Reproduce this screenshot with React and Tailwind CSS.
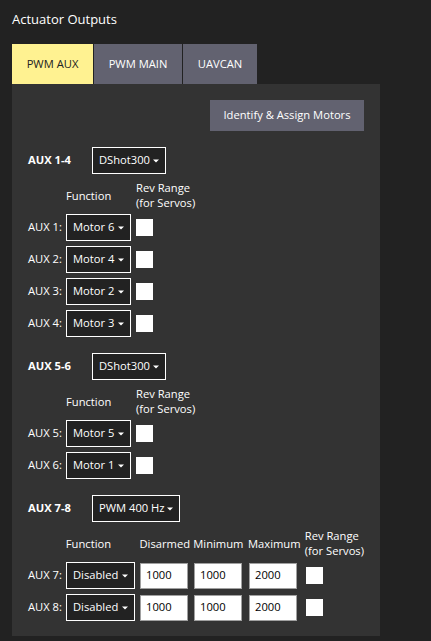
const groups = [
  {
    name: "AUX 1-4",
    protocol: "DShot300",
    protocolWidth: "w-[74px]",
    pwm: false,
    rows: [
      { label: "AUX 1:", fn: "Motor 6" },
      { label: "AUX 2:", fn: "Motor 4" },
      { label: "AUX 3:", fn: "Motor 2" },
      { label: "AUX 4:", fn: "Motor 3" },
    ],
  },
  {
    name: "AUX 5-6",
    protocol: "DShot300",
    protocolWidth: "w-[74px]",
    pwm: false,
    rows: [
      { label: "AUX 5:", fn: "Motor 5" },
      { label: "AUX 6:", fn: "Motor 1" },
    ],
  },
  {
    name: "AUX 7-8",
    protocol: "PWM 400 Hz",
    protocolWidth: "w-[88px]",
    pwm: true,
    rows: [
      { label: "AUX 7:", fn: "Disabled", disarmed: "1000", min: "1000", max: "2000" },
      { label: "AUX 8:", fn: "Disabled", disarmed: "1000", min: "1000", max: "2000" },
    ],
  },
];

function Caret() {
  return (
    <svg width="6" height="4" viewBox="0 0 6 4" className="shrink-0">
      <path d="M0 0.5 L6 0.5 L3 3.5 Z" fill="#ffffff" />
    </svg>
  );
}

function Select({ value, className }) {
  return (
    <div
      className={`h-[27px] flex items-center justify-between pl-[6px] pr-[6px] border border-white bg-[#222222] text-[11.2px] text-white whitespace-nowrap ${className}`}
    >
      <span>{value}</span>
      <Caret />
    </div>
  );
}

function Checkbox() {
  return <div className="w-[17px] h-[17px] bg-white" />;
}

function NumInput({ value }) {
  return (
    <div className="w-[48px] h-[26px] flex items-center pl-[5px] bg-white border border-[#a0a0a0] text-[11.2px] text-black">
      {value}
    </div>
  );
}

function Group({ group }) {
  const fnCol = group.pwm ? "w-[74px]" : "w-[70px]";
  const selW = group.pwm ? "w-[69px]" : "w-[65px]";
  return (
    <div className="flex flex-col">
      <div className="flex items-center h-[27px]">
        <div className="w-[64px] text-[11.2px] font-bold text-white">{group.name}</div>
        <Select value={group.protocol} className={group.protocolWidth} />
      </div>

      <div className="flex items-center mt-[6px] h-[30px] text-[11.2px] leading-[15px] text-white whitespace-nowrap">
        <div className="w-[38px]" />
        <div className={fnCol}>Function</div>
        {group.pwm && (
          <>
            <div className="w-[54px]">Disarmed</div>
            <div className="w-[55px]">Minimum</div>
            <div className="w-[57px]">Maximum</div>
          </>
        )}
        <div>
          <div>Rev Range</div>
          <div>(for Servos)</div>
        </div>
      </div>

      <div className="flex flex-col gap-[5px] mt-[4px]">
        {group.rows.map((r) => (
          <div key={r.label} className="flex items-center h-[27px]">
            <div className="w-[38px] text-[11.2px] text-white whitespace-nowrap">{r.label}</div>
            <div className={fnCol}>
              <Select value={r.fn} className={selW} />
            </div>
            {group.pwm && (
              <>
                <div className="w-[54px]">
                  <NumInput value={r.disarmed} />
                </div>
                <div className="w-[55px]">
                  <NumInput value={r.min} />
                </div>
                <div className="w-[57px]">
                  <NumInput value={r.max} />
                </div>
              </>
            )}
            <Checkbox />
          </div>
        ))}
      </div>
    </div>
  );
}

export default function App() {
  const tabs = [
    { name: "PWM AUX", w: "w-[81px]", active: true },
    { name: "PWM MAIN", w: "w-[88px]" },
    { name: "UAVCAN", w: "w-[74px]" },
  ];
  return (
    <div className="min-h-[641px] bg-[#222222] px-[12px] pt-[9px] font-['Open_Sans',sans-serif]">
      <div className="text-[13px] leading-[20px] text-white">Actuator Outputs</div>

      <div className="flex gap-[1px] mt-[15px]">
        {tabs.map((t) => (
          <div
            key={t.name}
            className={`${t.w} h-[40px] flex items-center justify-center text-[11.2px] ${
              t.active ? "bg-[#fff291] text-[#222222]" : "bg-[#626270] text-white"
            }`}
          >
            {t.name}
          </div>
        ))}
      </div>

      <div className="w-[368px] bg-[#333333] px-[16px] pt-[16px] pb-[15px] flex flex-col">
        <div className="flex justify-end">
          <div className="w-[154px] h-[31px] flex items-center justify-center bg-[#626270] text-[11.2px] text-white">
            Identify &amp; Assign Motors
          </div>
        </div>
        <div className="flex flex-col gap-[16px] mt-[16px]">
          {groups.map((g) => (
            <Group key={g.name} group={g} />
          ))}
        </div>
      </div>
    </div>
  );
}
